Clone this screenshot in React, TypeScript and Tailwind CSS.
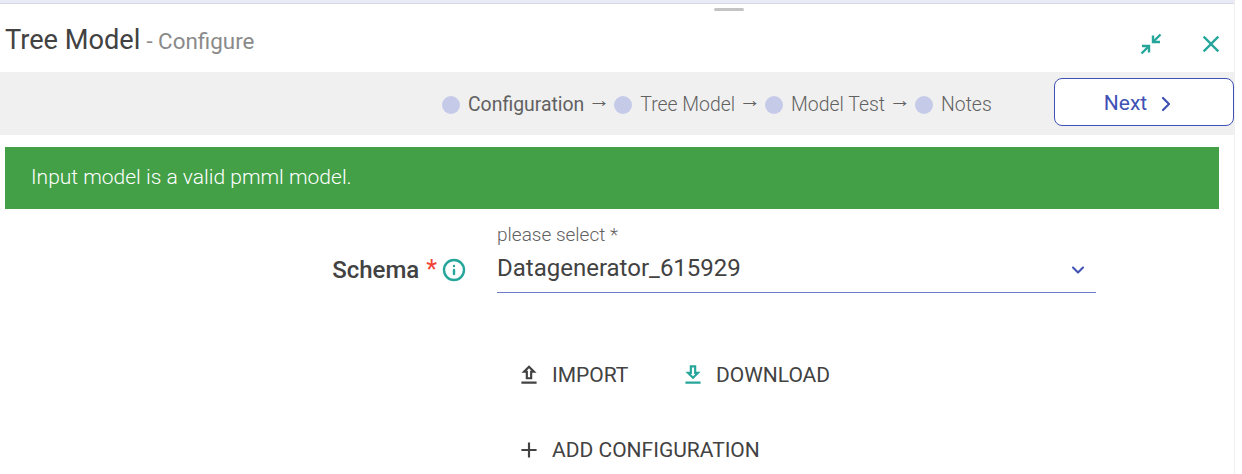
import React from "react";
import { ChevronDown, ChevronRight, Info } from "lucide-react";

const steps = [
  { label: "Configuration", active: true },
  { label: "Tree Model", active: false },
  { label: "Model Test", active: false },
  { label: "Notes", active: false },
];

function MaterialIcon({ d, size, color }: { d: string; size: number; color: string }) {
  return (
    <svg width={size} height={size} viewBox="0 0 24 24" fill={color} className="shrink-0">
      <path d={d} />
    </svg>
  );
}

function CollapseIcon() {
  return (
    <svg width="24" height="24" viewBox="0 0 24 24" fill="none" stroke="#26a69a" strokeWidth="2.4" className="shrink-0">
      <path d="M21.5 2.5 14 10" />
      <path d="M14 3.5V10H21" />
      <path d="M2.5 21.5 10 14" />
      <path d="M3 14H10V20.5" />
    </svg>
  );
}

const closePath =
  "M19 6.41 17.59 5 12 10.59 6.41 5 5 6.41 10.59 12 5 17.59 6.41 19 12 13.41 17.59 19 19 17.59 13.41 12z";
const uploadPath =
  "M9 16h6v-6h4l-7-7-7 7h4v6zm3-10.17L14.17 8H13v6h-2V8H9.83L12 5.83zM5 18h14v2H5z";
const downloadPath =
  "M19 9h-4V3H9v6H5l7 7 7-7zm-8 2V5h2v6h1.17L12 13.17 9.83 11H11zm-6 7h14v2H5z";
const addPath = "M19 13h-6v6h-2v-6H5v-2h6V5h2v6h6v2z";

export default function App() {
  return (
    <div className="w-[1242px] h-[474px] overflow-hidden bg-white font-['Roboto',sans-serif] text-[#424242]">
      <div className="w-[1235px] h-full border-r border-[#f0f0f0]">
        <div className="h-1 bg-[#e8eaf6] border-b border-[#d5d8e8]" />
        <div className="relative h-[68px] flex items-center justify-between pl-[5px] pr-[9px] pt-[4px]">
          <div className="absolute left-[714px] top-1 w-[30px] h-[3px] bg-[#c4c4c4] rounded-sm" />
          <div className="flex items-baseline">
            <span className="text-[27.2px]">Tree Model</span>
            <span className="text-[22.4px] text-[#8a8a8a] ml-[6px]">- Configure</span>
          </div>
          <div className="flex items-center gap-[34px] pt-[8px]">
            <CollapseIcon />
            <MaterialIcon d={closePath} size={28} color="#26a69a" />
          </div>
        </div>
        <div className="h-[63px] bg-[#f0f0f0] flex items-center pl-[442px]">
          <div className="w-[612px] mt-[2px] flex items-center text-[19.4px] font-light text-[#616161]">
            {steps.map((step, i) => (
              <React.Fragment key={step.label}>
                {i > 0 && (
                  <span className="w-[30px] text-center text-[22px] font-normal font-['Liberation_Sans',sans-serif] -translate-y-[5px]">
                    →
                  </span>
                )}
                <span className="w-[18px] h-[18px] rounded-full bg-[#c5cae9] mr-[8px]" />
                <span className={step.active ? "font-normal" : ""}>{step.label}</span>
              </React.Fragment>
            ))}
          </div>
          <button className="w-[180px] h-12 -mt-[3px] pr-[6px] pt-[4px] bg-white border border-[#3f51b5] rounded-lg flex items-center justify-center gap-[7px] text-[21px] text-[#3f51b5]">
            Next
            <ChevronRight size={24} strokeWidth={2.2} />
          </button>
        </div>
        <div className="mt-3 ml-[5px] mr-[15px] h-[62px] bg-[#43a047] flex items-center pl-[26px] text-[21px] font-light text-white">
          Input model is a valid pmml model.
        </div>
        <div className="flex mt-[13px] h-[71px]">
          <div className="w-[497px] flex items-center justify-end pr-[31px] pt-[24px]">
            <span className="text-[24px] font-medium">Schema</span>
            <span className="text-[25px] text-[#f44336] ml-[7px]">*</span>
            <Info size={24} color="#26a69a" strokeWidth={2.4} className="ml-[5px]" />
          </div>
          <div className="w-[599px] border-b border-[#6f7cc9]">
            <div className="mt-px text-[19px] font-light leading-6 text-[#616161]">please select *</div>
            <div className="flex items-center justify-between pr-[8px] mt-[5px]">
              <span className="text-[24px] leading-8">Datagenerator_615929</span>
              <ChevronDown size={20} color="#3f51b5" strokeWidth={2.5} className="mt-[4px]" />
            </div>
          </div>
        </div>
        <div className="pl-[516px] mt-[66px] flex items-center text-[21px] leading-[32px]">
          <span className="flex items-center gap-[10px] mr-[52px]">
            <MaterialIcon d={uploadPath} size={26} color="#424242" />
            IMPORT
          </span>
          <span className="flex items-center gap-[9.5px]">
            <MaterialIcon d={downloadPath} size={26} color="#26a69a" />
            DOWNLOAD
          </span>
        </div>
        <div className="pl-[516px] mt-[43px] flex items-center gap-[10px] text-[21px] leading-[32px]">
          <MaterialIcon d={addPath} size={26} color="#424242" />
          ADD CONFIGURATION
        </div>
      </div>
    </div>
  );
}
